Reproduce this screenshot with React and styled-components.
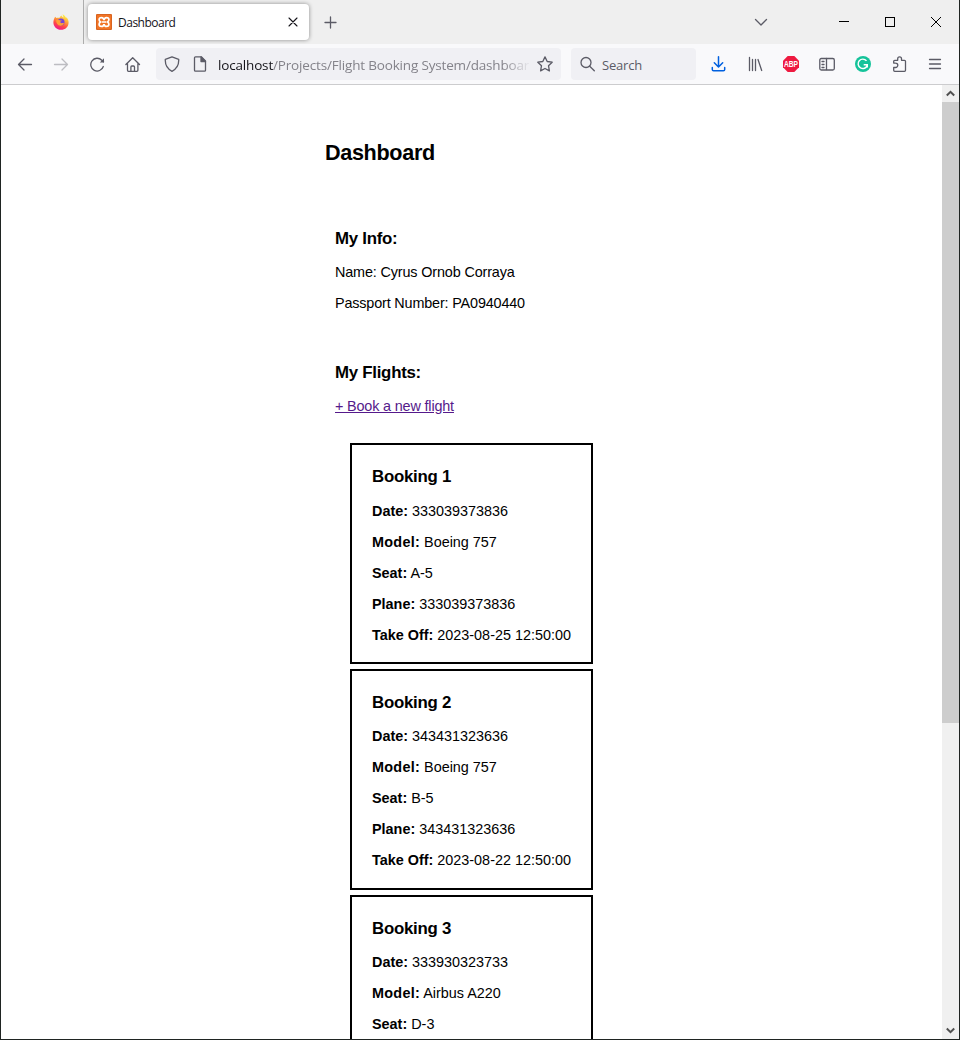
import React from 'react';
import styled, { createGlobalStyle } from 'styled-components';

const GlobalStyle = createGlobalStyle`
  * { box-sizing: border-box; }
  html, body { margin: 0; padding: 0; overflow: hidden; }
`;

const Window = styled.div`
  width: 960px;
  height: 1040px;
  display: flex;
  flex-direction: column;
  overflow: hidden;
  background: #fff;
  border: solid #1f2422;
  border-width: 0 1px 1px 1px;
  font-family: 'Open Sans', 'Noto Sans', sans-serif;
`;

const TabStrip = styled.div`
  height: 44px;
  flex: none;
  display: flex;
  background: #efefef;
`;

const PinnedArea = styled.div`
  width: 83px;
  padding: 14px 0 0 52px;
  border-right: 1px solid #adadad;

  svg { display: block; }
`;

const Tab = styled.div`
  width: 221px;
  height: 36px;
  margin: 4px 0 0 4px;
  padding: 0 8px;
  display: flex;
  align-items: center;
  background: #fff;
  border-radius: 4px;
  box-shadow: 0 0 4px rgba(0, 0, 0, 0.42);
`;

const TabTitle = styled.span`
  flex: 1;
  margin: 2px 0 0 6px;
  font-size: 12px;
  letter-spacing: -0.5px;
  line-height: 18px;
  color: #15141a;
`;

const NewTab = styled.div`
  width: 42px;
  height: 44px;
  display: grid;
  place-items: center;
`;

const WindowControls = styled.div`
  margin-left: auto;
  display: flex;
  align-items: center;
`;

const ControlSlot = styled.div`
  width: ${(p) => p.$width}px;
  height: 44px;
  display: grid;
  place-items: center;
`;

const Toolbar = styled.div`
  height: 41px;
  flex: none;
  display: flex;
  padding-top: 4px;
  background: #f9f9fb;
  border-bottom: 1px solid #ccccce;
`;

const NavButtons = styled.div`
  width: 155px;
  height: 32px;
  padding-left: 6px;
  display: flex;
`;

const NavButton = styled.div`
  width: 36px;
  height: 32px;
  display: grid;
  place-items: center;
`;

const Field = styled.div`
  width: ${(p) => p.$width}px;
  height: 32px;
  display: flex;
  align-items: center;
  padding: 0 8px;
  margin-right: 10px;
  background: #f0f0f4;
  border-radius: 4px;
`;

const Address = styled.div`
  width: 311px;
  margin: 2px 8px 0 10px;
  white-space: nowrap;
  font-size: 13.5px;
  letter-spacing: -0.17px;
  line-height: 22px;
  color: #84838a;
  mask-image: linear-gradient(to right, #000 285px, transparent 313px);
`;

const Host = styled.span`
  color: #15141a;
`;

const SearchLabel = styled.span`
  margin: 2px 0 0 7px;
  font-size: 13px;
  letter-spacing: -0.2px;
  line-height: 22px;
  color: #5b5b66;
`;

const Gap = styled.span`
  width: 12px;
`;

const Extensions = styled.div`
  display: flex;
  margin-left: -5px;
`;

const Viewport = styled.div`
  flex: 1;
  min-height: 0;
  display: flex;
`;

const Page = styled.main`
  flex: 1;
  overflow: hidden;
  padding: 55px 0 0 324px;
  color: #000;
  font-family: 'Liberation Sans', Arial, sans-serif;
  font-size: 14.4px;
`;

const PageTitle = styled.h1`
  margin: 0;
  height: 26px;
  font-size: 21.6px;
  letter-spacing: -0.33px;
  line-height: 26px;
`;

const Section = styled.section`
  padding: ${(p) => p.$top}px 0 0 10px;
`;

const Heading = styled.h3`
  margin: 0;
  font-size: 16.85px;
  letter-spacing: -0.27px;
  line-height: 20px;
`;

const Line = styled.p`
  margin: 0;
  height: 31px;
  line-height: 31px;
  white-space: nowrap;
  letter-spacing: ${(p) => p.$tracking || 0}px;
`;

const Label = styled.b`
  letter-spacing: ${(p) => p.$tracking || 0}px;
`;

const Lines = styled.div`
  padding-top: ${(p) => p.$top}px;
`;

const BookLink = styled.a`
  color: #551a8b;
  text-decoration: underline;
`;

const Bookings = styled.div`
  display: flex;
  flex-direction: column;
  gap: 5px;
  padding: 21.4px 0 0 15px;
`;

const Card = styled.article`
  width: 243px;
  height: 220.8px;
  flex: none;
  border: 2px solid #000;
  padding: 21.6px 0 0 20px;
`;

const Scrollbar = styled.div`
  width: 17px;
  display: flex;
  flex-direction: column;
  background: #f0f0f0;
`;

const ScrollArrow = styled.div`
  height: 17px;
  display: grid;
  place-items: center;
`;

const Thumb = styled.div`
  height: 621px;
  margin-bottom: auto;
  background: #cdcdcd;
`;

const Icon = ({ size = 16, color = '#5b5b66', sw = 1.3, children }) => (
  <svg width={size} height={size} viewBox="0 0 16 16" fill="none" stroke={color}
    strokeWidth={sw} strokeLinecap="round" strokeLinejoin="round">{children}</svg>
);

const FirefoxLogo = () => (
  <svg width="16" height="16" viewBox="0 0 16 16">
    <defs>
      <linearGradient id="flame" x1="0.8" y1="0" x2="0.35" y2="1">
        <stop offset="0.1" stopColor="#fff04a" />
        <stop offset="0.4" stopColor="#ffa436" />
        <stop offset="0.7" stopColor="#ff4a45" />
        <stop offset="1" stopColor="#f0148a" />
      </linearGradient>
    </defs>
    <path fill="url(#flame)" d="M2.2 2.7 3.4 4.1C4.4 3.6 5.6 3.6 6.3 4c.6-1.3 1.3-2 2.4-2.5.2 1.2 1 1.7 1.8 2.2C10.3 2.3 9.9 1.1 9.4.2c2.2.9 3.2 2.3 3.7 3.7l.5-.6c1.2 1.5 2 3.3 2 5.1 0 4.2-3.3 7.4-7.6 7.4S.4 12.500.4 8.500c0-2.100.7-4.300 1.800-5.800Z" />
    <circle cx="8" cy="8" r="3.5" fill="#7442d8" />
    <path fill="#ff9f35" d="M3.100 6.200c1.500-.9 3-.6 4.300.2l1.400.1c-.2.9-1.300 1-1.600 1.300-.2.600.6 1.500 1.900 1.300 1.100-.2 1.700-.1 1.900.2-.7 1.800-2.100 2.500-3.700 2.400-2.500-.200-4.200-2.500-4.200-5.500Z" />
  </svg>
);

const XamppLogo = () => (
  <svg width="16" height="16" viewBox="0 0 16 16">
    <rect width="16" height="16" rx="1" fill="#d96420" />
    <rect x="1" y="1" width="14" height="14" rx="1" fill="#f17425" />
    <path d="M6 8H10M6.800 8 6.800 7.200M7.900 6.300C7.900 4.400 6.900 3.600 5.400 3.600c-1.500 0-2.300.9-2.300 2.100 0 1.200.7 1.800 1.400 2.300-.8.500-1.400 1.200-1.400 2.300 0 1.200.8 2.100 2.300 2.100 1.500 0 2.500-.8 2.500-2.500M8.100 6.300C8.100 4.400 9.100 3.600 10.600 3.600c1.500 0 2.300.9 2.300 2.100 0 1.200-.7 1.800-1.400 2.300.8.500 1.400 1.200 1.400 2.300 0 1.200-.8 2.100-2.300 2.100-1.500 0-2.500-.8-2.500-2.500" fill="none" stroke="#fff" strokeWidth="1.700" />
  </svg>
);

const AdblockLogo = () => (
  <svg width="16" height="16" viewBox="0 0 16 16">
    <path fill="#ee1a40" d="M4.700 0h6.600L16 4.700v6.600L11.300 16H4.700L0 11.300V4.700Z" />
    <text x="8" y="11" textAnchor="middle" textLength="14" lengthAdjust="spacingAndGlyphs"
      fontFamily="Liberation Sans, sans-serif" fontWeight="700" fontSize="8.500" fill="#fff">ABP</text>
  </svg>
);

const GrammarlyLogo = () => (
  <svg width="16" height="16" viewBox="0 0 16 16">
    <circle cx="8" cy="8" r="8" fill="#15c39a" />
    <path d="M11.500 4.900A4.700 4.700 0 1 0 12.300 9.300M8.700 8.700H12.300V11.400" fill="none" stroke="#fff" strokeWidth="1.450" />
  </svg>
);

const bookings = [
  { date: '333039373836', model: 'Boeing 757', seat: 'A-5', plane: '333039373836', takeOff: '2023-08-25 12:50:00' },
  { date: '343431323636', model: 'Boeing 757', seat: 'B-5', plane: '343431323636', takeOff: '2023-08-22 12:50:00' },
  { date: '333930323733', model: 'Airbus A220', seat: 'D-3' },
];

const Booking = ({ number, data }) => (
  <Card>
    <Heading>Booking {number}</Heading>
    <Lines $top={8.6}>
      <Line><Label>Date:</Label> {data.date}</Line>
      <Line><Label $tracking={0.28}>Model:</Label> {data.model}</Line>
      <Line><Label>Seat:</Label> {data.seat}</Line>
      {data.plane && <Line><Label>Plane:</Label> {data.plane}</Line>}
      {data.takeOff && <Line><Label>Take Off:</Label> {data.takeOff}</Line>}
    </Lines>
  </Card>
);

export default function App() {
  return (
    <Window>
      <GlobalStyle />
      <TabStrip>
        <PinnedArea><FirefoxLogo /></PinnedArea>
        <Tab>
          <XamppLogo />
          <TabTitle>Dashboard</TabTitle>
          <Icon color="#15141a" sw={1.1}><path d="M4 4l8 8M12 4l-8 8" /></Icon>
        </Tab>
        <NewTab><Icon sw={1.3}><path d="M8.500 3v11M3 8.500h11" /></Icon></NewTab>
        <WindowControls>
          <ControlSlot $width={60}><Icon sw={1.3}><path d="M2.500 5.500 8 11l5.500-5.500" /></Icon></ControlSlot>
          <ControlSlot $width={30} />
          <ControlSlot $width={46}>
            <svg width="10" height="10" shapeRendering="crispEdges"><path d="M0 4.500h10" stroke="#000" /></svg>
          </ControlSlot>
          <ControlSlot $width={46}>
            <svg width="10" height="10"><rect x=".5" y=".5" width="9" height="9" fill="none" stroke="#000" /></svg>
          </ControlSlot>
          <ControlSlot $width={46}>
            <svg width="10" height="10"><path d="M0 0l10 10M10 0 0 10" stroke="#000" /></svg>
          </ControlSlot>
        </WindowControls>
      </TabStrip>
      <Toolbar>
        <NavButtons>
          <NavButton><Icon><path d="M14.500 8.500H1.500M7 3 1.500 8.500 7 14" /></Icon></NavButton>
          <NavButton><Icon color="#bdbdc2"><path d="M1.500 8.500h13M9 3 14.500 8.500 9 14" /></Icon></NavButton>
          <NavButton>
            <Icon><path d="M14.300 10.500A6.400 6.400 0 1 1 12.800 4.200L14.500 5.700" /><path d="M15 2.300V6.500H10.800Z" fill="#5b5b66" stroke="none" /></Icon>
          </NavButton>
          <NavButton>
            <Icon><path d="M.9 8.500 7.700 1.700 14.500 8.500M2.500 7.500v6.800q0 1 1 1h8.400q1 0 1-1V7.500M5.900 15v-4q0-1 1-1h1.600q1 0 1 1v4" /></Icon>
          </NavButton>
        </NavButtons>
        <Field $width={405}>
          <Icon><path d="M8 .8 14.700 3.300c.3 5.200-1.700 9.500-6.700 12C3 12.800 1 8.500 1.300 3.300Z" /></Icon>
          <Gap />
          <Icon><path d="M3.500.8h5.800l4.200 4.200v9.200q0 1-1 1h-9q-1 0-1-1V1.800q0-1 1-1Z" /><path d="M9 1v4.500h4.500Z" fill="#5b5b66" /></Icon>
          <Address><Host>localhost</Host>/Projects/Flight Booking System/dashboar</Address>
          <Icon><path d="m8 .9 2.200 4.600 5 .7-3.700 3.500.9 5.200L8 12.500l-4.400 2.400.9-5.200L.8 6.200l5-.7Z" /></Icon>
        </Field>
        <Field $width={125}>
          <Icon><circle cx="7" cy="6.500" r="5" /><path d="m10.700 10.200 4.600 4.600" /></Icon>
          <SearchLabel>Search</SearchLabel>
        </Field>
        <Extensions>
          <NavButton><Icon color="#0060df" sw={1.5}><path d="M7.500.8v10M3.300 6.700 7.500 11l4.200-4.300M1.300 11.500v2q0 1.300 1.300 1.300h9.800q1.300 0 1.300-1.300v-2" /></Icon></NavButton>
          <NavButton><Icon sw={1.300}><path d="M2.500 1.500v13M5.500 3.500v11M8.500 3.500v11M11 3.500l3.700 11" /></Icon></NavButton>
          <NavButton><AdblockLogo /></NavButton>
          <NavButton><Icon><rect x=".8" y="2.500" width="14.500" height="11.500" rx="1.500" /><path d="M7.500 2.500v11M3 5.500h2M3 8.500h2M3 11.500h2" /></Icon></NavButton>
          <NavButton><GrammarlyLogo /></NavButton>
          <NavButton><Icon><path d="M2.700 7V5.300q0-1 1-1h3V2.700a1.900 1.900 0 0 1 3.800 0v1.600h3q1 0 1 1v9q0 1-1 1h-9.800q-1 0-1-1V11.500h1.900a2.200 2.200 0 0 0 0-4.400Z" /></Icon></NavButton>
          <NavButton><Icon><path d="M2.500 3.500h11M2.500 8h11M2.500 12.500h11" /></Icon></NavButton>
        </Extensions>
      </Toolbar>
      <Viewport>
        <Page>
          <PageTitle>Dashboard</PageTitle>
          <Section $top={63}>
            <Heading>My Info:</Heading>
            <Lines $top={8}>
              <Line $tracking={-0.14}>Name: Cyrus Ornob Corraya</Line>
              <Line $tracking={-0.16}>Passport Number: PA0940440</Line>
            </Lines>
          </Section>
          <Section $top={44}>
            <Heading>My Flights:</Heading>
            <Lines $top={8}>
              <Line $tracking={-0.16}><BookLink>+ Book a new flight</BookLink></Line>
            </Lines>
            <Bookings>
              {bookings.map((b, i) => <Booking key={i} number={i + 1} data={b} />)}
            </Bookings>
          </Section>
        </Page>
        <Scrollbar>
          <ScrollArrow><svg width="9" height="7"><path d="M.8 5.500 4.500 1.800 8.200 5.500" fill="none" stroke="#505050" strokeWidth="2" /></svg></ScrollArrow>
          <Thumb />
          <ScrollArrow><svg width="9" height="7"><path d="M.8 1.500 4.500 5.200 8.200 1.500" fill="none" stroke="#505050" strokeWidth="2" /></svg></ScrollArrow>
        </Scrollbar>
      </Viewport>
    </Window>
  );
}
